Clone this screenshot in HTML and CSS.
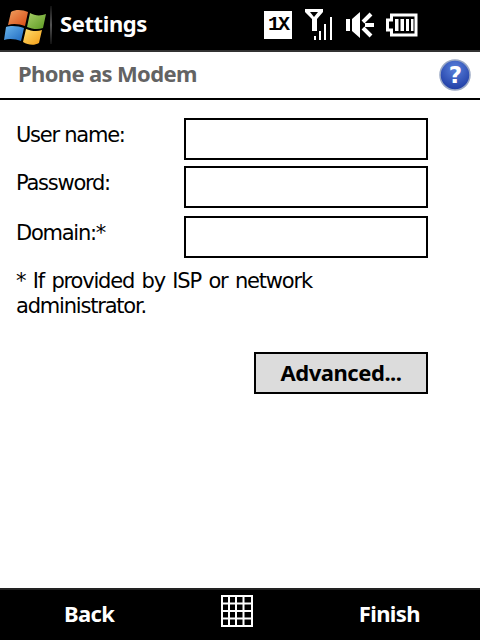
FILE: index.html
```html
<!DOCTYPE html>
<html lang="en">
<head>
    <meta charset="UTF-8">
    <title>Phone as Modem</title>
    <link rel="stylesheet" href="styles.css">
</head>
<body>
    <div class="screen">
        <div class="topbar">
            <svg class="start-logo" width="46" height="46" viewBox="0 0 46 46">
                <defs>
                    <linearGradient id="flagRed" x1="0" y1="0" x2="1" y2="1"><stop offset="0" stop-color="#f0a060"/><stop offset="1" stop-color="#d84a14"/></linearGradient>
                    <linearGradient id="flagGreen" x1="0" y1="0" x2="1" y2="1"><stop offset="0" stop-color="#a8cf68"/><stop offset="1" stop-color="#5c9a22"/></linearGradient>
                    <linearGradient id="flagBlue" x1="0" y1="0" x2="1" y2="1"><stop offset="0" stop-color="#6cb6ec"/><stop offset="1" stop-color="#1c68c0"/></linearGradient>
                    <linearGradient id="flagYellow" x1="0" y1="0" x2="1" y2="1"><stop offset="0" stop-color="#ffe070"/><stop offset="1" stop-color="#f49c14"/></linearGradient>
                </defs>
                <path d="M10 10 C15 7 22 8 27 10 L24 24 C19 22 12 21 7 23 Z" fill="url(#flagRed)"/>
                <path d="M29 11 C34 14 40 14 45 12 L42 26 C37 28 31 27 26 25 Z" fill="url(#flagGreen)"/>
                <path d="M5 25 C10 23 18 24 23 26 L20 39 C15 37 8 36 3 38 Z" fill="url(#flagBlue)"/>
                <path d="M25 27 C30 29 36 30 41 28 L38 41 C33 44 27 43 22 40 Z" fill="url(#flagYellow)"/>
            </svg>
            <span class="divider"></span>
            <span class="app-title">Settings</span>
            <div class="status-icons">
                <span class="badge-1x">1X</span>
                <svg width="28" height="32" viewBox="0 0 28 32" class="signal">
                    <path d="M1 0 H19 V3 L13 10 V22 H8 V10 L1 3 Z M6 3 L10 8 L14 3 Z" fill="#fff" fill-rule="evenodd"/>
                    <path d="M10 27h2v4h-2zM15 22h2v9h-2zM20 15h2v16h-2zM26 8h2v23h-2z" fill="#fff"/>
                </svg>
                <svg width="30" height="30" viewBox="0 0 30 30" class="volume">
                    <path d="M0 9 H4 V21 H0 Z M6 9 L14 2 V28 L6 21 Z" fill="#fff"/>
                    <path d="M17 12 L25 4 M19 15 H28 M17 18 L25 26" stroke="#fff" stroke-width="4" fill="none"/>
                </svg>
                <svg width="32" height="24" viewBox="0 0 32 24" class="battery">
                    <path d="M5.500 2 H30 V22 H5.500 V17 H1.500 V7 H5.500 Z" fill="none" stroke="#fff" stroke-width="3"/>
                    <path d="M9 6h3.500v12H9zM14.500 6h3.500v12h-3.500zM20 6h3v12h-3zM25 6h2.500v12H25z" fill="#fff"/>
                </svg>
            </div>
        </div>

        <div class="page-title">
            <span class="page-title-text">Phone as Modem</span>
            <svg class="help" width="32" height="32" viewBox="0 0 32 32">
                <defs>
                    <radialGradient id="helpFill" cx="0.5" cy="0.3" r="0.8"><stop offset="0" stop-color="#5a82dc"/><stop offset="1" stop-color="#16329c"/></radialGradient>
                </defs>
                <circle cx="16" cy="16" r="15" fill="url(#helpFill)" stroke="#9aa8c4" stroke-width="1.500"/>
                <text x="16" y="24" text-anchor="middle" class="help-mark">?</text>
            </svg>
        </div>

        <div class="content">
            <div class="field">
                <label>User name:</label>
                <div class="input"></div>
            </div>
            <div class="field">
                <label>Password:</label>
                <div class="input"></div>
            </div>
            <div class="field">
                <label>Domain:*</label>
                <div class="input"></div>
            </div>
            <p class="note">* If provided by ISP or network administrator.</p>
            <div class="actions">
                <div class="button">Advanced...</div>
            </div>
        </div>

        <div class="softkeys">
            <span class="softkey">Back</span>
            <svg class="keyboard" width="32" height="32" viewBox="0 0 32 32">
                <path d="M1 1H31V31H1ZM8 1V31M15 1V31M22.500 1V31M1 8.500H31M1 16H31M1 23.500H31" fill="none" stroke="#fff" stroke-width="2"/>
            </svg>
            <span class="softkey">Finish</span>
        </div>
    </div>
</body>
</html>
```

FILE: styles.css
```css
html, body {
    margin: 0;
    background-color: #ffffff;
}
.screen {
    display: flex;
    flex-direction: column;
    width: 480px;
    height: 640px;
    overflow: hidden;
    font-family: 'DejaVu Sans', sans-serif;
    color: #000;
}
.topbar {
    display: flex;
    align-items: center;
    height: 50px;
    background-color: #000;
    border-bottom: 2px solid #333;
    color: #fff;
}
.start-logo {
    margin-left: 1px;
    flex: none;
}
.divider {
    width: 2px;
    height: 38px;
    margin-left: 3px;
    background: linear-gradient(#111, #555 50%, #111);
}
.app-title {
    width: 86px;
    margin-left: 8px;
    padding-bottom: 4px;
    font-family: 'Noto Sans', sans-serif;
    font-size: 22px;
    font-weight: 700;
    letter-spacing: -0.4px;
    white-space: nowrap;
}
.status-icons {
    display: flex;
    align-items: center;
    gap: 13px;
    margin-left: 118px;
}
.badge-1x {
    width: 28px;
    height: 28px;
    background-color: #fff;
    color: #000;
    font-family: 'Liberation Mono', monospace;
    font-size: 20px;
    font-weight: 700;
    line-height: 28px;
    text-align: center;
    letter-spacing: -2px;
}
.signal {
    margin-left: -1px;
}
.volume {
    margin-left: 1px;
}
.battery {
    margin-left: -3px;
}
.page-title {
    display: flex;
    justify-content: space-between;
    align-items: center;
    height: 46px;
    padding: 0 9px 0 18px;
    border-bottom: 2px solid #000;
    color: #636363;
    font-family: 'Noto Sans', sans-serif;
    font-size: 22px;
    font-weight: 700;
    letter-spacing: -0.65px;
}
.page-title-text {
    padding-bottom: 4px;
}
.help-mark {
    fill: #fff;
    font-family: 'DejaVu Sans', sans-serif;
    font-size: 23px;
    font-weight: 700;
}
.content {
    flex: 1;
    padding: 18px 52px 0 16px;
}
.field {
    display: flex;
    justify-content: space-between;
    margin-bottom: 6px;
    font-size: 21px;
    letter-spacing: -1.25px;
}
.field:nth-child(2) {
    margin-bottom: 8px;
}
.field label {
    line-height: 34px;
}
.input {
    box-sizing: border-box;
    width: 244px;
    height: 42px;
    border: 2px solid #000;
}
.note {
    margin: 11px 0 0;
    font-size: 21px;
    line-height: 25px;
    letter-spacing: -1.2px;
    word-spacing: 2px;
}
.actions {
    display: flex;
    justify-content: flex-end;
    margin-top: 33px;
}
.button {
    box-sizing: border-box;
    width: 174px;
    height: 42px;
    border: 2px solid #000;
    background-color: #dcdcdc;
    font-family: 'Noto Sans', sans-serif;
    font-size: 22px;
    font-weight: 700;
    line-height: 36px;
    text-align: center;
    letter-spacing: -0.45px;
}
.softkeys {
    display: flex;
    justify-content: space-between;
    align-items: center;
    height: 50px;
    padding: 0 60px 0 64px;
    background-color: #000;
    border-top: 2px solid #222;
    color: #fff;
    font-family: 'Noto Sans', sans-serif;
    font-size: 22px;
    font-weight: 700;
    letter-spacing: -0.6px;
}
.softkey {
    padding-bottom: 4px;
}
.keyboard {
    margin-top: -8px;
}
```
